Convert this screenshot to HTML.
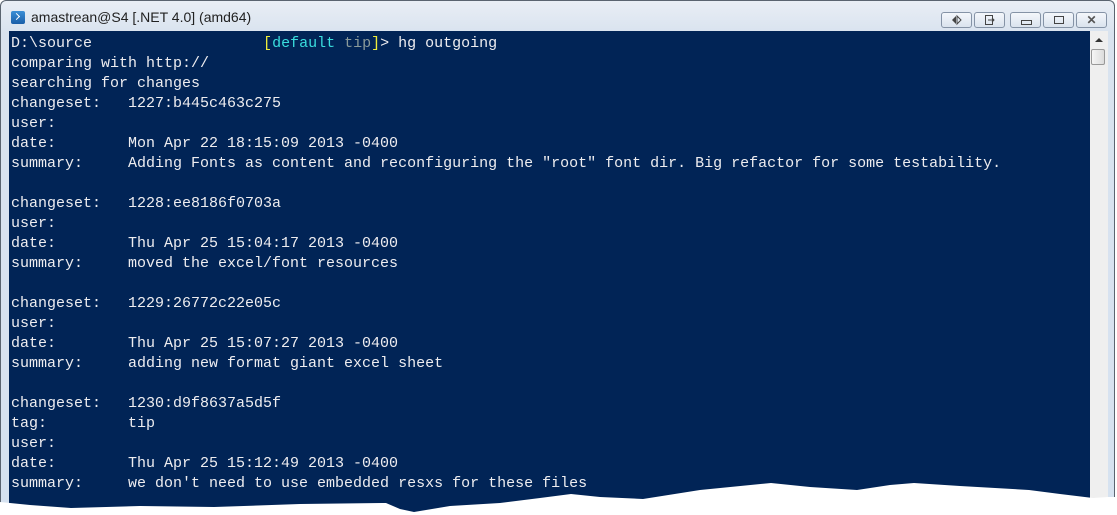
<!DOCTYPE html>
<html><head><meta charset="utf-8"><style>
html,body{margin:0;padding:0;background:#fff;width:1117px;height:515px;overflow:hidden;position:relative}
.win{position:absolute;left:0;top:0;width:1115px;height:515px;background:linear-gradient(#e9eef5,#d9e3ef 32px,#d6e2f0);border:1px solid #5a6470;border-bottom:none;border-radius:6px 6px 0 0;box-sizing:border-box}
.title{position:absolute;left:30px;top:8px;font:14px "Liberation Sans",sans-serif;color:#222}
.ico{position:absolute;left:10px;top:10px;width:14px;height:13px;background:linear-gradient(#3b8fd6,#1a5ea8);border-radius:2px}
.ico:after{content:"";position:absolute;left:3px;top:3px;width:4px;height:4px;border-right:1.5px solid #fff;border-bottom:1.5px solid #fff;transform:rotate(-45deg)}
.btn{position:absolute;top:11px;height:16px;border:1px solid #8593a6;border-radius:3px;background:linear-gradient(#f4f7fb,#dae3ee);box-sizing:border-box}
.term{position:absolute;left:9px;top:31px;width:1081px;height:484px;background:#012456;overflow:hidden}
pre{margin:0;position:absolute;left:2px;top:3px;font:15px/20px "Liberation Mono",monospace;color:#eeedf0;letter-spacing:0}
.sb{position:absolute;left:1090px;top:31px;width:18px;height:484px;background:#efefef}
.thumb{position:absolute;left:1091px;top:49px;width:14px;height:16px;border:1px solid #999;border-radius:2px;background:linear-gradient(90deg,#f6f6f6,#dcdcdc);box-sizing:border-box}
.y{color:#ecec3c}.c{color:#3adede}.g{color:#8a9a9a}
</style></head><body>
<div class="win">
<div class="ico"></div>
<div class="title">amastrean@S4 [.NET 4.0] (amd64)</div>
<div class="btn" style="left:940px;width:31px"><svg width="29" height="14" style="position:absolute;left:0;top:0"><polygon points="10,7 14,3 14,11" fill="#444"/><polygon points="19,7 15,3 15,11" fill="none" stroke="#444"/></svg></div>
<div class="btn" style="left:973px;width:31px"><svg width="29" height="14" style="position:absolute;left:0;top:0"><rect x="10.5" y="2.5" width="7" height="9" fill="none" stroke="#444"/><path d="M13 7h6M17 5l2 2-2 2" fill="none" stroke="#444"/></svg></div>
<div class="btn" style="left:1009px;width:31px"><div style="position:absolute;left:10px;top:7px;width:9px;height:3px;border:1px solid #444"></div></div>
<div class="btn" style="left:1042px;width:31px"><div style="position:absolute;left:10px;top:3px;width:8px;height:6px;border:1px solid #444"></div></div>
<div class="btn" style="left:1075px;width:31px;text-align:center;font:bold 12px/14px 'Liberation Sans',sans-serif;color:#555">✕</div>
</div>
<div class="term"><pre>D:\source                   <span class="y">[</span><span class="c">default</span> <span class="g">tip</span><span class="y">]</span>&gt; hg outgoing
comparing with http://
searching for changes
changeset:   1227:b445c463c275
user:
date:        Mon Apr 22 18:15:09 2013 -0400
summary:     Adding Fonts as content and reconfiguring the "root" font dir. Big refactor for some testability.

changeset:   1228:ee8186f0703a
user:
date:        Thu Apr 25 15:04:17 2013 -0400
summary:     moved the excel/font resources

changeset:   1229:26772c22e05c
user:
date:        Thu Apr 25 15:07:27 2013 -0400
summary:     adding new format giant excel sheet

changeset:   1230:d9f8637a5d5f
tag:         tip
user:
date:        Thu Apr 25 15:12:49 2013 -0400
summary:     we don't need to use embedded resxs for these files</pre></div>
<div class="sb"></div>
<div style="position:absolute;left:1095px;top:38px;width:0;height:0;border-left:4px solid transparent;border-right:4px solid transparent;border-bottom:4px solid #333"></div>
<div class="thumb"></div>
<svg width="1117" height="515" style="position:absolute;left:0;top:0">
<polygon fill="#fff" points="0,502 30,505 71,508 140,506 214,507 300,504 386,503 400,509 414,512 450,506 500,503 540,498 571,494 600,497 643,499 700,490 771,483 810,487 857,490 890,485 914,483 960,486 1029,490 1060,494 1093,498 1108,497 1117,497 1117,515 0,515"/>
</svg>
</body></html>
